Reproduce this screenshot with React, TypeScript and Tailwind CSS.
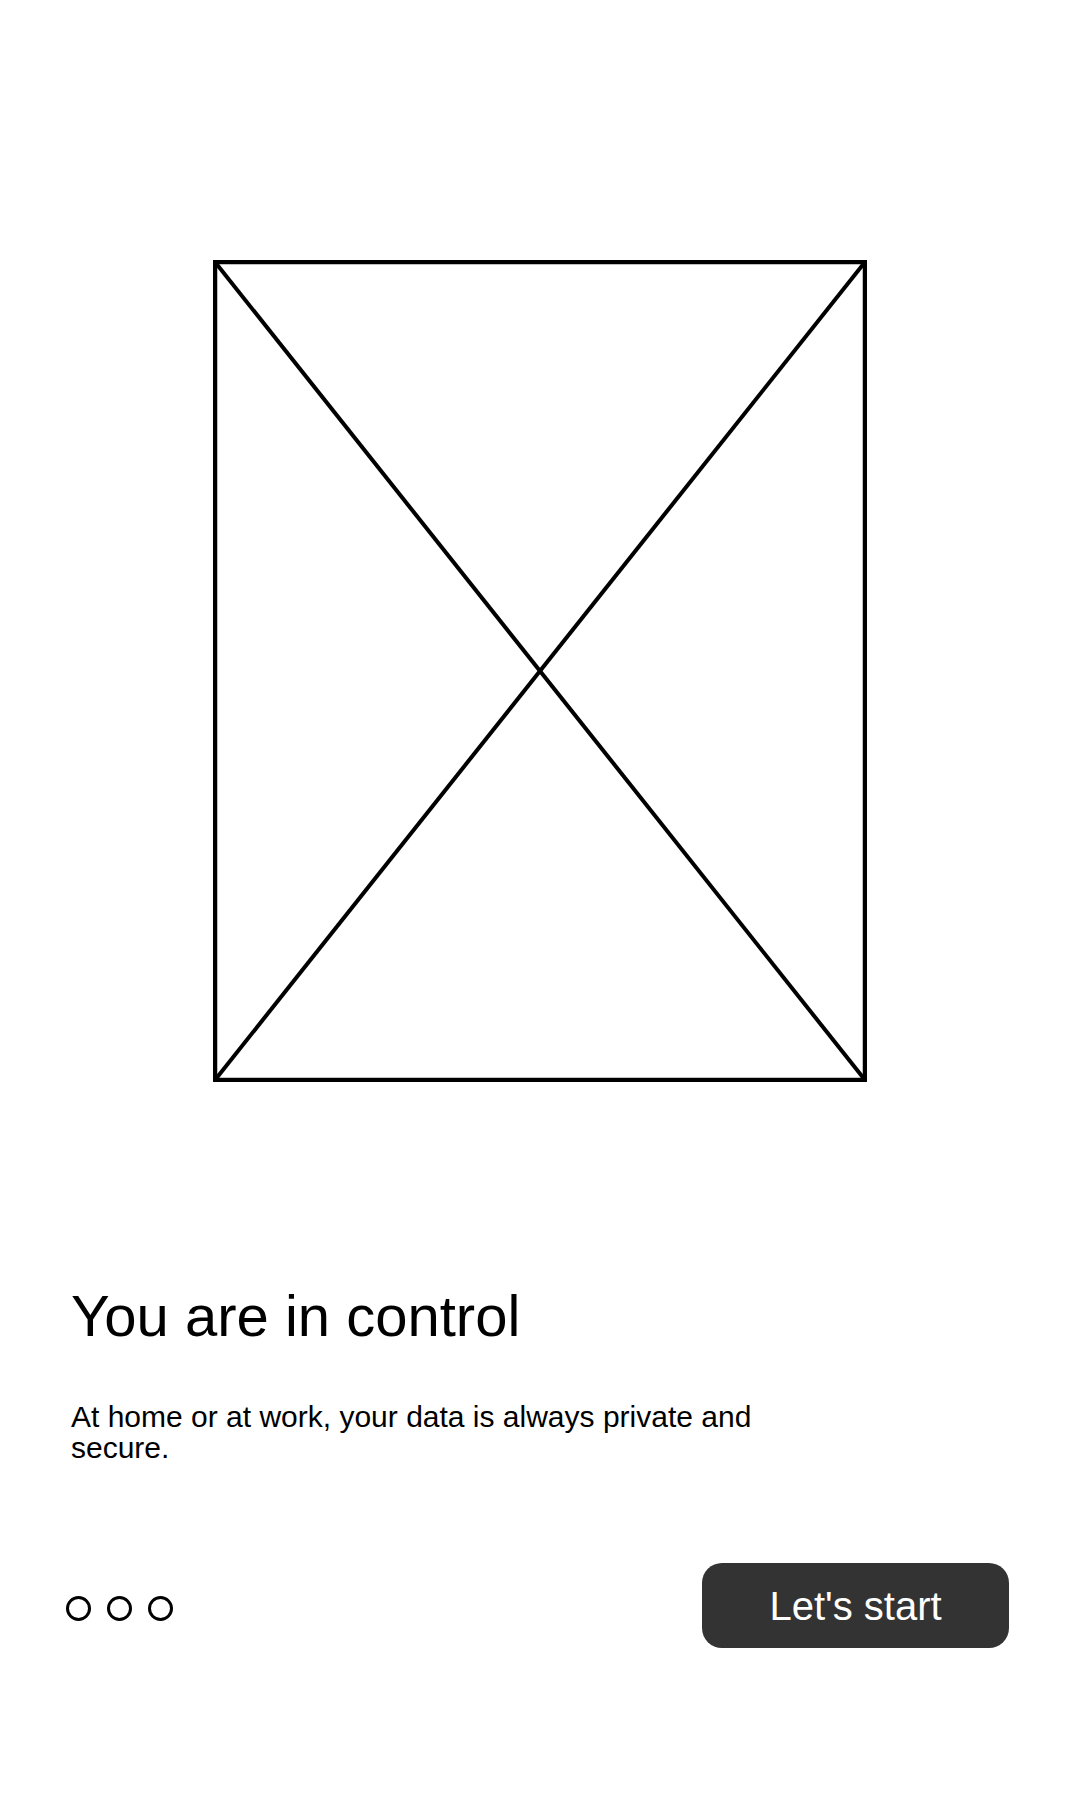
export default function App() {
  return (
    <div className="w-[1080px] h-[1800px] bg-white flex flex-col font-['Liberation_Sans',Arial,sans-serif] text-black">
      {/* Placeholder picture */}
      <div className="pt-[260px] flex justify-center">
        <svg width="654" height="822" viewBox="0 0 654 822" className="block">
          <rect x="2" y="2" width="650" height="818" fill="none" stroke="#000" strokeWidth="4.5" />
          <line x1="2" y1="2" x2="652" y2="820" stroke="#000" strokeWidth="4" />
          <line x1="652" y1="2" x2="2" y2="820" stroke="#000" strokeWidth="4" />
        </svg>
      </div>

      <div className="px-[71px] pt-[201px]">
        <h1 className="text-[58px] leading-[66px] font-normal">You are in control</h1>
        <p className="mt-[52px] w-[740px] text-[30px] leading-[31px]">
          At home or at work, your data is always private and secure.
        </p>
      </div>

      <div className="px-[71px] pt-[100px] flex items-center justify-between">
        <div className="flex items-center gap-[16px] -ml-[5px] mt-[5px]">
          <span className="w-[25px] h-[25px] rounded-full border-[3px] border-black" />
          <span className="w-[25px] h-[25px] rounded-full border-[3px] border-black" />
          <span className="w-[25px] h-[25px] rounded-full border-[3px] border-black" />
        </div>
        <button className="w-[307px] h-[85px] rounded-[20px] bg-[#333333] text-white text-[40px] leading-none flex items-center justify-center">
          Let's start
        </button>
      </div>
    </div>
  );
}
